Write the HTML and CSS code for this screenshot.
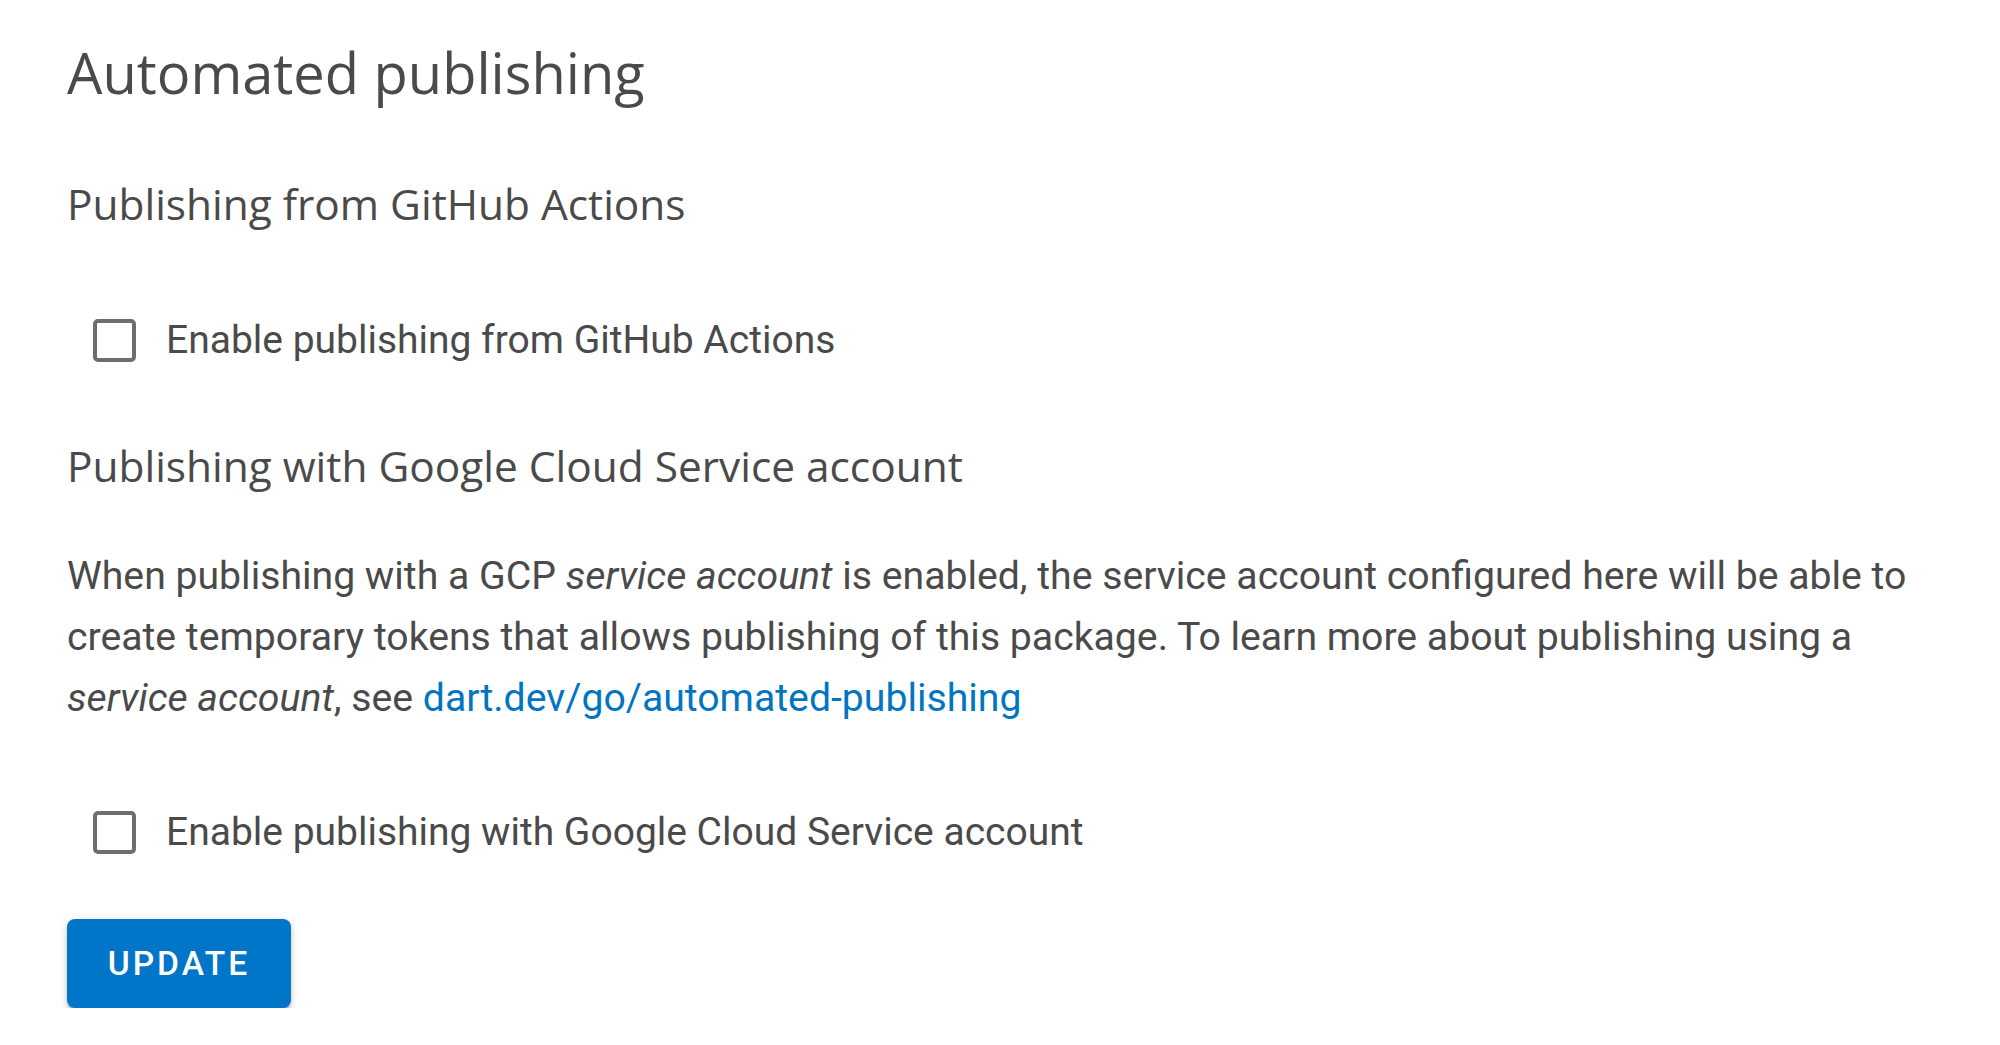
FILE: index.html
```html
<!DOCTYPE html>
<html lang="en">
<head>
<meta charset="utf-8">
<title>Automated publishing</title>
<link rel="stylesheet" href="styles.css">
</head>
<body>
<main class="page">
  <h2 class="title">Automated publishing</h2>

  <section class="section">
    <h3 class="subtitle">Publishing from GitHub Actions</h3>
    <label class="check">
      <span class="check-box"></span>
      <span class="check-label">Enable publishing from GitHub Actions</span>
    </label>
  </section>

  <section class="section">
    <h3 class="subtitle subtitle-gcp">Publishing with Google Cloud Service account</h3>
    <p class="text">When publishing with a GCP <em>service account</em> is enabled, the service account configured here will be able to create temporary tokens that allows publishing of this package. To learn more about publishing using a <em>service account</em>, see <a class="link" href="#">dart.dev/go/automated-publishing</a></p>
    <label class="check check-gcp">
      <span class="check-box"></span>
      <span class="check-label">Enable publishing with Google Cloud Service account</span>
    </label>
  </section>

  <button class="btn" type="button">UPDATE</button>
</main>
</body>
</html>
```

FILE: styles.css
```css
html, body {
  margin: 0;
  padding: 0;
  background: #ffffff;
}

body {
  font-family: Roboto, "Liberation Sans", Arial, sans-serif;
  color: #4a4a4a;
}

.page {
  padding: 32px 67px 0 67px;
  display: flex;
  flex-direction: column;
  align-items: flex-start;
}

.title {
  margin: 0;
  font-family: "Open Sans", "Noto Sans", sans-serif;
  font-weight: 400;
  font-size: 56px;
  line-height: 80px;
  color: #4a4a4a;
}

.section {
  display: flex;
  flex-direction: column;
  align-items: flex-start;
  width: 100%;
}

.subtitle {
  margin: 62px 0 0 0;
  font-family: "Open Sans", "Noto Sans", sans-serif;
  font-weight: 400;
  font-size: 42.4px;
  line-height: 60px;
  color: #4a4a4a;
}

.subtitle-gcp {
  margin-top: 73px;
}

.check {
  display: flex;
  align-items: center;
  margin: 83px 0 0 26px;
  gap: 30px;
  cursor: pointer;
}

.check-box {
  box-sizing: border-box;
  width: 43px;
  height: 43px;
  border: 4.8px solid #6e6e6e;
  border-radius: 5px;
  flex: none;
}

.check-label {
  font-size: 39px;
  line-height: 46px;
  color: #4a4a4a;
}

.text {
  margin: 50px 0 0 0;
  font-size: 39.2px;
  line-height: 61px;
  color: #4a4a4a;
}

.text em {
  font-style: italic;
}

.link {
  color: #0175c2;
  text-decoration: none;
}

.check-gcp {
  margin-top: 80px;
}

.btn {
  margin-top: 64px;
  width: 224px;
  height: 89px;
  border: none;
  border-radius: 8px;
  background: #0175c8;
  color: #ffffff;
  font-family: Roboto, "Liberation Sans", sans-serif;
  font-weight: 500;
  font-size: 33.6px;
  letter-spacing: 3px;
  box-shadow: 0 5px 3px -2px rgba(0,0,0,0.2), 0 4px 5px 0 rgba(0,0,0,0.14), 0 2px 10px 0 rgba(0,0,0,0.12);
  cursor: pointer;
}
```
